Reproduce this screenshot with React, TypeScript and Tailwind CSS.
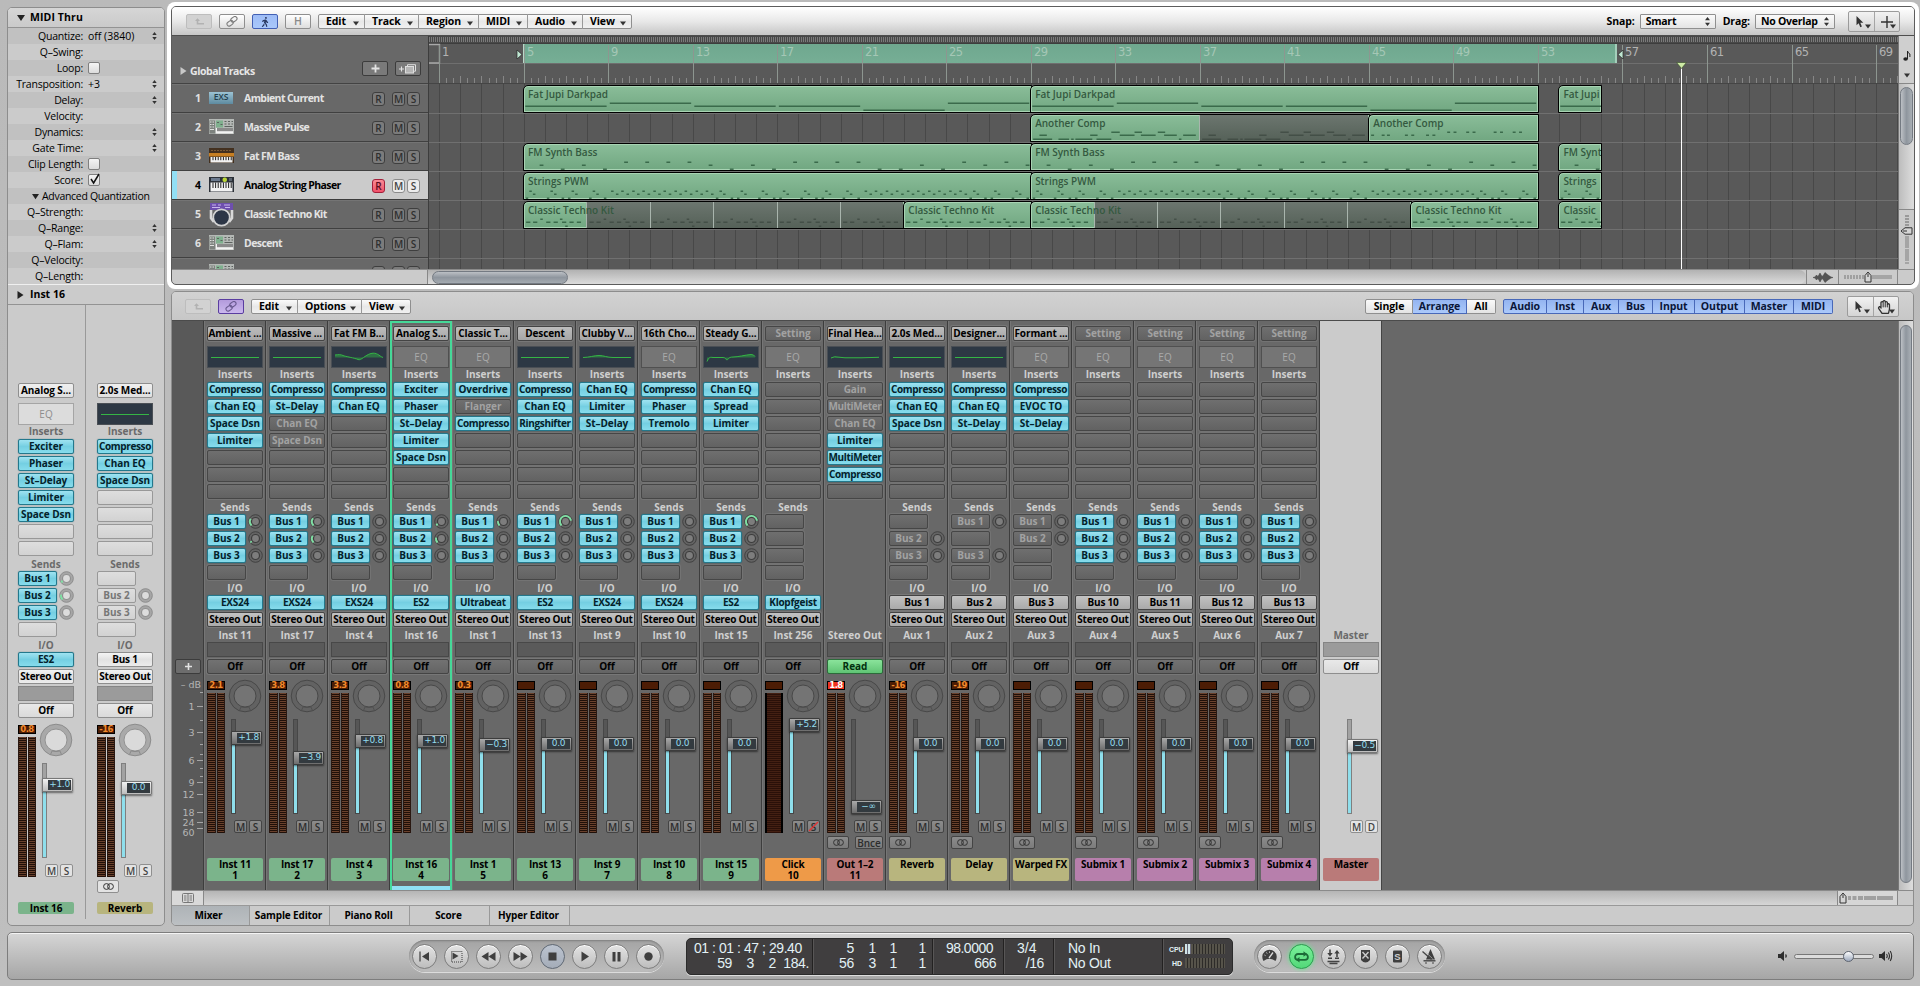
import React from 'react';
import { FaWalking, FaRegHandPaper } from 'react-icons/fa';

/* ---------- shared bits ---------- */

const lightBtn = 'bg-gradient-to-b from-[#f4f4f4] via-[#e2e2e2] to-[#ececec] border border-[#8e8e8e] text-black';
const cyanBtn = 'bg-gradient-to-b from-[#9fe3f1] via-[#74cfe2] to-[#86dcec] border border-[#23788c] text-[#04222b] shadow-[0_0_1px_#1d5d6c]';

function Down({ className = '' }: { className?: string }) {
  return (
    <svg width="6" height="5" viewBox="0 0 6 5" className={className}>
      <path d="M0 0.5h6L3 4.5z" fill="#333" />
    </svg>
  );
}

function UpDown({ h = 9 }: { h?: number }) {
  return (
    <svg width="5" height={h} viewBox="0 0 5 9">
      <path d="M2.5 0L5 3.3H0zM2.5 9L0 5.7h5z" fill="#333" />
    </svg>
  );
}

function BackIcon({ color }: { color: string }) {
  return (
    <svg width="9" height="7" viewBox="0 0 9 7" fill="none" stroke={color}>
      <path d="M2.5 1.5v4.3H9" strokeWidth="1.6" />
      <path d="M0 3L2.5 0.3 5 3z" fill={color} stroke="none" />
    </svg>
  );
}

function LinkIcon({ color }: { color: string }) {
  return (
    <svg width="12" height="11" viewBox="0 0 12 11" fill="none" stroke={color} strokeWidth="1.1">
      <rect x="4.6" y="1.2" width="6.6" height="4.2" rx="2.1" transform="rotate(-35 7.9 3.3)" />
      <rect x="0.8" y="5.2" width="6.6" height="4.2" rx="2.1" transform="rotate(-35 4.1 7.3)" />
    </svg>
  );
}

function IconBtn({ tone, children }: { tone: 'off' | 'light' | 'blue' | 'purple'; children: React.ReactNode }) {
  const cls = {
    off: 'border-[#bdbdbd] bg-[#d2d2d2]',
    light: 'border-[#8f8f8f] bg-gradient-to-b from-white to-[#dedede]',
    blue: 'border-[#4260b4] bg-gradient-to-b from-[#9dbcf6] to-[#a9c8fb]',
    purple: 'border-[#5a3da0] bg-gradient-to-b from-[#b39bdc] to-[#cbb8ee]',
  }[tone];
  return <div className={`flex h-[15px] w-[26px] shrink-0 items-center justify-center rounded-[2px] border ${cls}`}>{children}</div>;
}

function MenuBar({ items }: { items: [string, string][] }) {
  return (
    <div className="flex h-[15px] rounded-[2px] border border-[#8f8f8f] bg-gradient-to-b from-[#fbfbfb] via-[#e8e8e8] to-[#f0f0f0]">
      {items.map(([t, w], i) => (
        <div key={t} className={`relative -my-px flex items-center pl-[7px] text-[10.5px] font-bold leading-none tracking-[-0.1px] text-black ${w} ${i ? 'border-l border-[#999]' : ''}`}>
          <span>{t}</span>
          <Down className="absolute right-[5px] top-[7px]" />
        </div>
      ))}
    </div>
  );
}

function Tool({ children, last = false }: { children: React.ReactNode; last?: boolean }) {
  return (
    <div className={`relative flex h-full w-[25px] items-center justify-center ${last ? 'border-l border-[#a5a5a5]' : ''}`}>
      {children}
      <Down className="absolute bottom-[2px] right-[3px]" />
    </div>
  );
}

function Pointer() {
  return (
    <svg width="8" height="12" viewBox="0 0 8 12" className="-ml-1">
      <path d="M0.5 0v9.2l2.2-2 1.6 4 1.6-.7-1.6-3.8h3z" fill="#333" />
    </svg>
  );
}

/* ---------- inspector parameters ---------- */

type Param = { n: string; v?: string; ud?: boolean; chk?: 0 | 1; tri?: boolean };
const params: Param[] = [
  { n: 'Quantize:', v: 'off (3840)', ud: true },
  { n: 'Q–Swing:' },
  { n: 'Loop:', chk: 0 },
  { n: 'Transposition:', v: '+3', ud: true },
  { n: 'Delay:', ud: true },
  { n: 'Velocity:' },
  { n: 'Dynamics:', ud: true },
  { n: 'Gate Time:', ud: true },
  { n: 'Clip Length:', chk: 0 },
  { n: 'Score:', chk: 1 },
  { n: 'Advanced Quantization', tri: true },
  { n: 'Q–Strength:' },
  { n: 'Q–Range:', ud: true },
  { n: 'Q–Flam:', ud: true },
  { n: 'Q–Velocity:' },
  { n: 'Q–Length:' },
];

function Inspector() {
  return (
    <div className="flex h-[919px] w-[158px] shrink-0 flex-col overflow-hidden rounded-[5px] border border-[#8d8d8d] bg-[#cbcbcb] shadow-[inset_0_1px_0_#eee]">
      <div className="flex h-[20px] shrink-0 items-center border-b border-[#939393] bg-gradient-to-b from-[#d6d6d6] to-[#cacaca] pl-[9px] text-[10.5px] font-bold">
        <svg width="8" height="8" viewBox="0 0 8 8"><path d="M0 1h8L4 7z" fill="#222" /></svg>
        <span className="ml-[5px] tracking-[0.1px]">MIDI Thru</span>
      </div>
      {params.map((p, i) => (
        <div key={p.n} className={`flex h-[16px] shrink-0 items-center text-[10.5px] leading-none text-black ${i % 2 ? 'bg-[#cbcbcb]' : 'bg-[#c1c1c1]'}`}>
          {p.tri ? (
            <div className="flex items-center pl-[24px]">
              <svg width="7" height="7" viewBox="0 0 8 8"><path d="M0 1h8L4 7z" fill="#222" /></svg>
              <span className="ml-[3px] whitespace-nowrap tracking-[-0.3px]">{p.n}</span>
            </div>
          ) : (
            <>
              <span className="w-[75px] whitespace-nowrap text-right tracking-[-0.2px]">{p.n}</span>
              <span className="ml-[5px] flex-1">
                {p.v}
                {p.chk !== undefined && (
                  <span className="block h-[12px] w-[12px] rounded-[2px] border border-[#7f7f7f] bg-gradient-to-b from-[#f4f4f4] to-[#dcdcdc]">
                    {p.chk === 1 && (
                      <svg width="11" height="12" viewBox="0 0 11 12" className="-mt-[2px] overflow-visible">
                        <path d="M2 6l2.6 4L10 1" stroke="#111" strokeWidth="1.5" fill="none" />
                      </svg>
                    )}
                  </span>
                )}
              </span>
              <span className="w-[12px]">{p.ud && <UpDown h={8} />}</span>
            </>
          )}
        </div>
      ))}
      <div className="flex h-[21px] shrink-0 items-center border-b border-t border-b-[#939393] border-t-[#efefef] pl-[9px] text-[10.5px] font-bold">
        <svg width="7" height="8" viewBox="0 0 7 8"><path d="M0.5 0v8l6-4z" fill="#222" /></svg>
        <span className="ml-[6px]">Inst 16</span>
      </div>
      <div className="flex min-h-0 flex-1">
        <div className="mb-[6px] w-[78px] border-r border-[#999] pl-[10px] pt-[78px]">
          <Strip s={inspA} light />
        </div>
        <div className="flex-1 pl-[11px] pt-[78px]">
          <Strip s={inspB} light />
        </div>
      </div>
    </div>
  );
}

/* ---------- channel strip ---------- */

type StripData = {
  name: string; num?: string; setting?: string; eq?: string; ins?: string[]; sends?: string[] | null; knobs?: number[];
  io?: string; ioCyan?: boolean; label?: string; auto?: string; peak?: string; db: string; y: number; color: string;
  stereo?: boolean; out?: boolean; click?: boolean; master?: boolean; sel?: boolean;
};

const G = 'bg-[#7bb48b]', O = 'bg-[#ee9a48]', R = 'bg-[#ba7a79]', Y = 'bg-[#b8b57e]', P = 'bg-[#b77fac]';
const flat = 'M4 10.5H52';
const b3 = ['Bus 1', 'Bus 2', 'Bus 3', ''];

const inspA: StripData = { name: 'Inst 16', setting: 'Analog S...', ins: ['Exciter', 'Phaser', 'St–Delay', 'Limiter', 'Space Dsn'], sends: b3, knobs: [0.08, 0.2, 0], io: 'ES2', ioCyan: true, peak: '0.8', db: '+1.0', y: 14.5, color: G };
const inspB: StripData = { name: 'Reverb', setting: '2.0s Med...', eq: flat, ins: ['Compresso', 'Chan EQ', 'Space Dsn'], sends: ['', '-Bus 2', '-Bus 3', ''], io: 'Bus 1', peak: '-16', db: '0.0', y: 17.5, color: Y, stereo: true };

const strips: StripData[] = [
  { name: 'Inst 11', num: '1', setting: 'Ambient ...', eq: flat, ins: ['Compresso', 'Chan EQ', 'Space Dsn', 'Limiter'], sends: b3, knobs: [0.28, 0.06, 0], io: 'EXS24', ioCyan: true, label: 'Inst 11', peak: '2.1', db: '+1.8', y: 11.5, color: G },
  { name: 'Inst 17', num: '2', setting: 'Massive ...', eq: flat, ins: ['Compresso', 'St–Delay', '-Chan EQ', '-Space Dsn'], sends: b3, knobs: [0.3, 0.28, 0], io: 'EXS24', ioCyan: true, label: 'Inst 17', peak: '3.8', db: '−3.9', y: 31.5, color: G },
  { name: 'Inst 4', num: '3', setting: 'Fat FM B...', eq: 'M4 8C8 7.5 10 7.5 12 8.5S24 11 27 12.5S34 8 40 6.5S48 9 52 10.5', ins: ['Compresso', 'Chan EQ'], sends: b3, io: 'EXS24', ioCyan: true, label: 'Inst 4', peak: '3.3', db: '+0.8', y: 14.5, color: G },
  { name: 'Inst 16', num: '4', setting: 'Analog S...', ins: ['Exciter', 'Phaser', 'St–Delay', 'Limiter', 'Space Dsn'], sends: b3, knobs: [0.08, 0.2, 0], io: 'ES2', ioCyan: true, label: 'Inst 16', peak: '0.8', db: '+1.0', y: 14.5, color: G, sel: true },
  { name: 'Inst 1', num: '5', setting: 'Classic T...', ins: ['Overdrive', '-Flanger', 'Compresso'], sends: b3, knobs: [0.18, 0, 0], io: 'Ultrabeat', ioCyan: true, label: 'Inst 1', peak: '0.3', db: '−0.3', y: 18.5, color: G },
  { name: 'Inst 13', num: '6', setting: 'Descent', eq: flat, ins: ['Compresso', 'Chan EQ', 'Ringshifter'], sends: b3, knobs: [0.8, 0, 0], io: 'ES2', ioCyan: true, label: 'Inst 13', db: '0.0', y: 17.5, color: G },
  { name: 'Inst 9', num: '7', setting: 'Clubby V...', eq: 'M4 10.5C10 10.5 15 8.5 20 8.5S28 10.5 34 10.5H52', ins: ['Chan EQ', 'Limiter', 'St–Delay'], sends: b3, io: 'EXS24', ioCyan: true, label: 'Inst 9', db: '0.0', y: 17.5, color: G },
  { name: 'Inst 10', num: '8', setting: '16th Cho...', ins: ['Compresso', 'Phaser', 'Tremolo'], sends: b3, io: 'EXS24', ioCyan: true, label: 'Inst 10', db: '0.0', y: 17.5, color: G },
  { name: 'Inst 15', num: '9', setting: 'Steady G...', eq: 'M4 14.5C6 10 7 10 10 10.5H20C23 10.5 23 13 24 13S25 10 30 10S42 8 48 7.5Q51 7.5 52 9.5', ins: ['Chan EQ', 'Spread', 'Limiter'], sends: b3, knobs: [0.8, 0, 0], io: 'ES2', ioCyan: true, label: 'Inst 15', db: '0.0', y: 17.5, color: G },
  { name: 'Click', num: '10', ins: [], sends: ['', '', '', ''], io: 'Klopfgeist', ioCyan: true, label: 'Inst 256', db: '+5.2', y: -1.5, color: O, click: true },
  { name: 'Out 1–2', num: '11', setting: 'Final Hea...', eq: 'M4 11Q8 9 10 10L18 10.8H34L52 10.3', ins: ['-Gain', '-MultiMeter', '-Chan EQ', 'Limiter', 'MultiMeter', 'Compresso'], sends: null, label: 'Stereo Out', auto: 'Read', peak: '1.8', db: '−∞', y: 80.5, color: R, stereo: true, out: true },
  { name: 'Reverb', setting: '2.0s Med...', eq: flat, ins: ['Compresso', 'Chan EQ', 'Space Dsn'], sends: ['', '-Bus 2', '-Bus 3', ''], io: 'Bus 1', label: 'Aux 1', peak: '-16', db: '0.0', y: 17.5, color: Y, stereo: true },
  { name: 'Delay', setting: 'Designer...', eq: flat, ins: ['Compresso', 'Chan EQ', 'St–Delay'], sends: ['-Bus 1', '', '-Bus 3', ''], io: 'Bus 2', label: 'Aux 2', peak: '-19', db: '0.0', y: 17.5, color: Y, stereo: true },
  { name: 'Warped FX', setting: 'Formant ...', ins: ['Compresso', 'EVOC TO', 'St–Delay'], sends: ['-Bus 1', '-Bus 2', '', ''], io: 'Bus 3', label: 'Aux 3', db: '0.0', y: 17.5, color: Y, stereo: true },
  { name: 'Submix 1', ins: [], sends: b3, io: 'Bus 10', label: 'Aux 4', db: '0.0', y: 17.5, color: P, stereo: true },
  { name: 'Submix 2', ins: [], sends: b3, io: 'Bus 11', label: 'Aux 5', db: '0.0', y: 17.5, color: P, stereo: true },
  { name: 'Submix 3', ins: [], sends: b3, io: 'Bus 12', label: 'Aux 6', db: '0.0', y: 17.5, color: P, stereo: true },
  { name: 'Submix 4', ins: [], sends: b3, io: 'Bus 13', label: 'Aux 7', db: '0.0', y: 17.5, color: P, stereo: true },
];
const master: StripData = { name: 'Master', label: 'Master', db: '−0.5', y: 19.5, color: R, master: true };

function Slot({ text, light, w = 'w-[56px]' }: { text?: string; light?: boolean; w?: string }) {
  const off = !text || text.startsWith('-');
  const t = text?.replace(/^-/, '');
  const cls = off
    ? light
      ? 'bg-gradient-to-b from-[#dedede] to-[#d2d2d2] border border-[#989898] text-[#777]'
      : 'bg-gradient-to-b from-[#6f6f6f] to-[#626262] border border-[#464646] text-[#a2a2a2] shadow-[0_0_0_1px_#737373]'
    : cyanBtn;
  const long = t === 'MultiMeter' || t === 'Ringshifter' || t === 'Compresso';
  return (
    <div className={`flex h-[15px] shrink-0 items-center justify-center overflow-hidden whitespace-nowrap rounded-[2px] pb-px text-[10px] font-bold leading-none ${long ? 'tracking-[-0.35px]' : 'tracking-[-0.05px]'} ${w} ${cls}`}>
      {t}
    </div>
  );
}

function Knob({ v, light }: { v: number; light?: boolean }) {
  const a0 = (225 * Math.PI) / 180;
  const a = a0 - v * ((270 * Math.PI) / 180);
  const p = (t: number) => `${7.5 + 5.6 * Math.cos(t)} ${7.5 - 5.6 * Math.sin(t)}`;
  return (
    <svg width="15" height="15" viewBox="0 0 15 15">
      <circle cx="7.5" cy="7.5" r="6.8" fill={light ? '#a6a6a6' : '#636363'} stroke={light ? '#8c8c8c' : '#414141'} />
      <circle cx="7.5" cy="7.5" r="4" fill={light ? '#dcdcdc' : '#7d7d7d'} stroke={light ? '#909090' : '#3c3c3c'} strokeWidth="1.2" />
      {v > 0 && <path d={`M${p(a0)}A5.6 5.6 0 ${v > 0.66 ? 1 : 0} 1 ${p(a)}`} fill="none" stroke="#7fe0a4" strokeWidth="1.9" />}
    </svg>
  );
}

function SmallBtn({ t, light, slash, w = 'w-[13px]' }: { t: React.ReactNode; light?: boolean; slash?: boolean; w?: string }) {
  return (
    <div
      className={`relative flex h-[13px] shrink-0 items-center justify-center rounded-[2px] border text-[10px] font-semibold leading-none ${w} ${
        light ? 'border-[#8f8f8f] bg-[#e3e3e3] text-[#444]' : 'border-[#444] bg-gradient-to-b from-[#8c8c8c] to-[#7b7b7b] text-[#2d2d2d]'
      }`}
    >
      {t}
      {slash && (
        <svg width="11" height="11" viewBox="0 0 11 11" className="absolute left-0 top-0"><path d="M1 10L10 1" stroke="#e03535" strokeWidth="1.4" /></svg>
      )}
    </div>
  );
}

function Rings() {
  return (
    <svg width="13" height="7" viewBox="0 0 13 7" fill="none" stroke="#333">
      <circle cx="4.5" cy="3.5" r="2.9" /><circle cx="8.5" cy="3.5" r="2.9" />
    </svg>
  );
}

const meterCls = 'h-full bg-[repeating-linear-gradient(180deg,#6a412c_0px,#6a412c_1px,#1f0f08_1px,#1f0f08_2px)] border-x border-[#2a1811]';

function Strip({ s, light }: { s: StripData; light?: boolean }) {
  const head = light ? 'text-[#6a6a6a]' : 'text-[#cfcfcf]';
  const hide = s.master ? 'invisible' : '';
  const noIo = s.master || s.out;
  const secLabel = `flex shrink-0 items-center justify-center pb-[2px] text-[10px] font-bold leading-none whitespace-nowrap ${head}`;
  return (
    <div className="flex w-[56px] flex-col">
      {s.setting ? (
        <div className={`flex h-[15px] shrink-0 items-center justify-center overflow-hidden whitespace-nowrap rounded-[2px] border pb-px text-[10px] font-bold leading-none tracking-[-0.1px] text-black ${light ? 'border-[#8e8e8e] bg-gradient-to-b from-[#efefef] to-[#e0e0e0]' : 'border-[#444] bg-gradient-to-b from-[#bdbdbd] to-[#a6a6a6] shadow-[0_0_0_1px_#777]'}`}>{s.setting}</div>
      ) : (
        <div className={`${hide}`}><Slot text="-Setting" light={light} /></div>
      )}
      {s.eq ? (
        <div className="mt-[5px] h-[22px] shrink-0 border border-[#4a4f55] bg-[#2d3844]">
          <svg width="56" height="20" viewBox="0 0 56 20" className="-ml-px">
            {s.eq !== flat && <path d={`${s.eq}V10.5H4z`} fill="#2f8a45" opacity="0.7" />}
            <path d={s.eq} fill="none" stroke="#35b545" strokeWidth="1" />
          </svg>
        </div>
      ) : (
        <div className={`mt-[5px] flex h-[22px] shrink-0 items-center justify-center border text-[10px] leading-none ${hide} ${light ? 'border-[#a5a5a5] bg-[#dcdcdc] text-[#8d8d8d]' : 'border-[#505050] bg-[#757575] text-[#aaa]'}`}>EQ</div>
      )}
      <div className={`${secLabel} h-[14px] ${hide}`}>Inserts</div>
      <div className={`flex h-[119px] shrink-0 flex-col gap-[2px] ${hide}`}>
        {Array.from({ length: 7 }, (_, i) => <Slot key={i} text={s.ins?.[i]} light={light} />)}
      </div>
      <div className={`${secLabel} h-[13px] ${s.sends ? '' : 'invisible'}`}>Sends</div>
      <div className={`flex h-[68px] shrink-0 flex-col gap-[2px] ${s.sends ? '' : 'invisible'}`}>
        {(s.sends ?? ['', '', '', '']).map((b, i) => (
          <div key={i} className="flex h-[15px] items-center justify-between">
            <Slot text={b} light={light} w="w-[39px]" />
            {b && <Knob v={s.knobs?.[i] ?? 0} light={light} />}
          </div>
        ))}
      </div>
      <div className={`${secLabel} h-[13px] ${noIo ? 'invisible' : ''}`}>I/O</div>
      {[s.io, 'Stereo Out'].map((t, i) => (
        <div key={i} className={`mb-[2px] flex h-[15px] shrink-0 items-center justify-center overflow-hidden whitespace-nowrap rounded-[2px] pb-px text-[10px] font-bold leading-none tracking-[-0.25px] ${noIo ? 'invisible' : ''} ${i === 0 && s.ioCyan ? cyanBtn : light ? lightBtn : 'border border-[#444] bg-gradient-to-b from-[#c2c2c2] to-[#aaaaaa] text-black shadow-[0_0_0_1px_#777]'}`}>
          {t}
        </div>
      ))}
      {s.label && <div className={`${secLabel} h-[13px]`}>{s.label}</div>}
      <div className={`h-[15px] shrink-0 border ${light ? 'border-[#858585] bg-[#9b9b9b]' : 'border-[#484848] bg-[#5a5a5a]'}`} />
      <div className={`mt-[2px] flex h-[15px] shrink-0 items-center justify-center rounded-[2px] border pb-px text-[10px] font-bold leading-none ${s.auto ? 'border-[#2c6b3a] bg-gradient-to-b from-[#8ae39b] to-[#5fc474] text-[#03300f]' : light ? 'border-[#8e8e8e] bg-gradient-to-b from-[#e9e9e9] to-[#dadada] text-black' : 'border-[#444] bg-gradient-to-b from-[#727272] to-[#646464] text-black shadow-[0_0_0_1px_#777]'}`}>
        {s.auto ?? 'Off'}
      </div>

      <div className="mt-[7px] flex h-[152px] shrink-0">
        <div className={`flex w-[18px] shrink-0 flex-col justify-between ${hide}`}>
          <div className={`flex h-[9px] items-center justify-center border border-black font-['DejaVu_Sans',sans-serif] text-[8.5px] font-bold leading-none tracking-[-0.6px] ${s.out ? 'bg-[#f0331f] text-white' : 'bg-[#4c1c04] text-[#f08a2c]'}`}>{s.peak}</div>
          <div className={`flex h-[140px] gap-[1px] ${s.click ? 'border-x-2 border-black' : ''}`}>
            {s.click ? (
              <div className="h-full flex-1 bg-[repeating-linear-gradient(180deg,#442013_0px,#442013_1px,#2a1009_1px,#2a1009_2px)]" />
            ) : (
              <><div className={`flex-1 ${meterCls}`} /><div className={`flex-1 ${meterCls}`} /></>
            )}
          </div>
        </div>
        <div className="flex w-[38px] flex-col">
          <svg width="34" height="34" viewBox="0 0 34 34" className={`-mt-[2px] ml-[3px] shrink-0 ${hide}`}>
            <circle cx="17" cy="17" r="15.8" fill={light ? '#a9a9a9' : '#626262'} stroke={light ? '#8c8c8c' : '#484848'} />
            <circle cx="17" cy="17" r="11" fill={light ? '#dadada' : '#747474'} stroke={light ? '#929292' : '#484848'} />
            <path d="M11.5 31.5l1.6-3.6q3.9 1.4 7.8 0l1.6 3.6" fill="none" stroke={light ? '#8a8a8a' : '#505050'} />
          </svg>
          <div className="relative mt-[6px] h-[95px] shrink-0">
            <div className={`absolute left-[6px] top-0 h-full w-[5px] border ${light ? 'border-[#7f7f7f] bg-[#a2a2a2]' : 'border-[#474747] bg-[#565656]'}`} />
            <div className="absolute bottom-[1px] left-[7px] w-[3px] bg-[#8fdfec]" style={{ height: Math.max(1, 95 - s.y - 10) }} />
            <div className={`absolute left-[6px] flex h-[14px] w-[31px] rounded-[1px] border p-[1px] shadow-[0_1px_2px_rgba(0,0,0,.5)] ${light ? 'border-[#777] bg-gradient-to-b from-[#f2f2f2] to-[#bdbdbd]' : 'border-[#3c3c3c] bg-gradient-to-b from-[#a9a9a9] to-[#6d6d6d]'}`} style={{ top: s.y }}>
              <div className="ml-[4px] flex flex-1 items-center justify-center bg-[#333a3f] font-['DejaVu_Sans',sans-serif] text-[9px] leading-none tracking-[-0.3px] text-[#94dcee]">{s.db}</div>
            </div>
          </div>
          <div className="mt-[6px] flex gap-[2px] pl-[9px]">
            <SmallBtn t="M" light={light} />
            <SmallBtn t={s.master ? 'D' : 'S'} light={light} slash={s.click} />
          </div>
        </div>
      </div>
      <div className={`mt-[3px] flex h-[13px] shrink-0 justify-between ${s.stereo ? '' : 'invisible'}`}>
        <SmallBtn t={<Rings />} light={light} w="w-[22px]" />
        {s.out && <SmallBtn t="Bnce" w="w-[28px]" />}
      </div>
      {light && !s.master ? (
        <div className={`mt-[9px] flex h-[12px] shrink-0 items-center justify-center rounded-[2px] text-[10px] font-bold leading-none tracking-[-0.1px] text-black ${s.color}`}>{s.name}</div>
      ) : (
        <div className={`mt-[9px] flex h-[23px] shrink-0 flex-col items-center whitespace-nowrap rounded-[2px] text-[10px] font-bold leading-[12px] tracking-[-0.15px] text-black ${s.color}`}>
          <span>{s.name}</span>
          <span className="-mt-px">{s.num}</span>
        </div>
      )}
    </div>
  );
}

/* ---------- arrange area ---------- */

const bar = (n: number) => 10.2 + (n - 1) * 21.13; // px inside the canvas
const BAR = 21.13;

type Note = [number, number, number]; // start bar, length, y
const padNotes = (len: number): Note[] => [20, 17, 20, 20, 24, 17].map((y, i) => [i * 4 + 0.06, 3.85, y] as Note).filter((n) => n[0] < len);
const bassLv = 'mlmlhhhhmlmlhhhhllmlhmhm';
const bassNotes = (len: number): Note[] =>
  bassLv.split('').map((c, i) => [i + 0.74, 0.18, c === 'h' ? 18 : c === 'm' ? 21 : 25] as Note).filter((n) => n[0] < len);
const stringNotes = (len: number): Note[] => {
  const out: Note[] = [];
  for (let i = 0; i < len; i++) {
    if (i % 12 < 4 || i % 12 > 8) {
      out.push([i + 0.08, 0.12, 25], [i + 0.25, 0.12, 18], [i + 0.42, 0.12, 21]);
      if (i % 2) out.push([i + 0.78, 0.12, 25]);
    } else {
      out.push([i + 0.12, 0.12, 18], [i + 0.35, 0.12, 21], [i + 0.6, 0.12, 18], [i + 0.85, 0.12, 21]);
    }
  }
  return out;
};
const drumNotes = (len: number): Note[] => {
  const out: Note[] = [];
  for (let b = 0; b < len; b += 3)
    out.push([b + 0.1, 0.2, 20], [b + 0.43, 0.2, 20], [b + 0.77, 0.12, 17], [b + 1.05, 0.2, 20], [b + 1.4, 0.2, 20], [b + 1.7, 0.12, 17], [b + 1.8, 0.2, 20], [b + 1.95, 0.12, 24], [b + 2.15, 0.2, 20], [b + 2.5, 0.2, 20]);
  return out.filter((n) => n[0] < len);
};
const compNotes = (len: number): Note[] => {
  const out: Note[] = [];
  for (let b = 0; b < len; b += 8)
    out.push([b + 0.1, 0.9, 24], [b + 0.4, 0.35, 20], [b + 1.3, 0.5, 24], [b + 1.9, 0.12, 24], [b + 2.1, 0.8, 24], [b + 2.8, 0.35, 20], [b + 3.1, 0.7, 24], [b + 3.8, 0.4, 17], [b + 4.2, 0.7, 20], [b + 4.9, 0.35, 17], [b + 5.2, 0.7, 20], [b + 6, 0.35, 17], [b + 6.3, 0.6, 20], [b + 7, 0.12, 24], [b + 7.2, 0.6, 20]);
  return out;
};
const comp2 = (): Note[] => [0.1, 0.6, 0.85, 1.7, 2, 2.7, 3].map((b) => [b, 0.14, 20] as Note).concat([3.7, 4, 4.6, 4.9, 5.9, 6.2, 6.8, 7.1].map((b) => [b, 0.14, 17] as Note));

type Region = { row: number; a: number; b: number; name: string; f: (n: number) => Note[]; loops?: number[] };
const regions: Region[] = [
  { row: 0, a: 5, b: 29, name: 'Fat Jupi Darkpad', f: padNotes },
  { row: 0, a: 29, b: 53, name: 'Fat Jupi Darkpad', f: padNotes },
  { row: 0, a: 54, b: 56, name: 'Fat Jupi', f: padNotes },
  { row: 1, a: 29, b: 45, name: 'Another Comp', f: compNotes, loops: [37, 45] },
  { row: 1, a: 45, b: 53, name: 'Another Comp', f: comp2 },
  { row: 2, a: 5, b: 29, name: 'FM Synth Bass', f: bassNotes },
  { row: 2, a: 29, b: 53, name: 'FM Synth Bass', f: bassNotes },
  { row: 2, a: 54, b: 56, name: 'FM Synt', f: bassNotes },
  { row: 3, a: 5, b: 29, name: 'Strings PWM', f: stringNotes },
  { row: 3, a: 29, b: 53, name: 'Strings PWM', f: stringNotes },
  { row: 3, a: 54, b: 56, name: 'Strings', f: stringNotes },
  { row: 4, a: 5, b: 23, name: 'Classic Techno Kit', f: drumNotes, loops: [8, 11, 14, 17, 20, 23] },
  { row: 4, a: 23, b: 29, name: 'Classic Techno Kit', f: drumNotes },
  { row: 4, a: 29, b: 47, name: 'Classic Techno Kit', f: drumNotes, loops: [32, 35, 38, 41, 44, 47] },
  { row: 4, a: 47, b: 53, name: 'Classic Techno Kit', f: drumNotes },
  { row: 4, a: 54, b: 56, name: 'Classic', f: drumNotes },
];

function RegionBox({ r }: { r: Region }) {
  const w = (r.b - r.a) * BAR + 1.5;
  const loop0 = r.loops ? (r.loops[0] - r.a) * BAR : Infinity;
  return (
    <div className="absolute h-[28px] overflow-hidden rounded-tl-[5px] border-[1.5px] border-black bg-gradient-to-b from-[#8abd99] to-[#71a781] shadow-[inset_0_0_0_1px_#a8d3b3]" style={{ left: bar(r.a) - 0.7, top: 1 + r.row * 29, width: w }}>
      {r.loops?.slice(0, -1).map((l, i) => (
        <div key={l} className="absolute top-0 h-full border-l border-[#a9b5ad] bg-gradient-to-b from-[#6c766f] to-[#556158]" style={{ left: (l - r.a) * BAR - 1, width: (r.loops![i + 1] - l) * BAR }} />
      ))}
      <svg width={w} height="27" className="absolute left-0 top-0">
        {r.f(r.b - r.a).map(([s, l, y], i) => (
          <rect key={i} x={s * BAR} y={y - 0.4} width={Math.max(l * BAR, 2.5)} height="1.2" fill={s * BAR >= loop0 ? '#3f4a43' : '#2c5a3c'} />
        ))}
      </svg>
      <span className="absolute left-[4px] top-[2px] whitespace-nowrap text-[10px] font-semibold leading-[12px] text-[#34593f]">{r.name}</span>
    </div>
  );
}

function Ruler() {
  const marks = Array.from({ length: 18 }, (_, i) => 1 + i * 4);
  const ticks = Array.from({ length: 70 * 3 }, (_, i) => i).filter((i) => bar(1 + i / 3) < 1470);
  return (
    <svg width="1470" height="48" viewBox="0 0 1470 48" className="block shrink-0">
      <defs>
        <pattern id="rib" width="2" height="8" patternUnits="userSpaceOnUse"><rect width="1" height="8" fill="#7b7b7b" /></pattern>
        <linearGradient id="cyc" x1="0" x2="0" y1="0" y2="1"><stop offset="0" stopColor="#6fa88f" /><stop offset="1" stopColor="#76ae95" /></linearGradient>
      </defs>
      <rect width="1470" height="48" fill="#595959" />
      <rect y="0" width="1470" height="7" fill="#484848" />
      <rect y="1" width="1470" height="5" fill="url(#rib)" />
      <rect y="7" width="1470" height="1" fill="#3d3d3d" />
      <rect x={bar(5)} y="8" width={1188 - bar(5)} height="19" fill="url(#cyc)" />
      <path d={`M${bar(5)} 8v19M1187 8v19`} stroke="#c5e6d5" strokeWidth="1.2" />
      <path d="M0 27.5H1470" stroke="#6f6f6f" />
      <path d="M0 8.5H10.5V27H0" fill="none" stroke="#a9a9a9" strokeWidth="1.4" />
      {ticks.map((i) => {
        const x = Math.round(bar(1 + i / 3)) + 0.5;
        return <path key={i} d={`M${x} ${i % 3 ? 42 : 40}V48`} stroke="#868686" />;
      })}
      {marks.map((n) => {
        const x = Math.round(bar(n)) + 0.5;
        const inCycle = n >= 5 && n <= 53;
        return (
          <g key={n}>
            <path d={`M${x} 9V48`} stroke="#8d9690" />
            <text x={x + 2.5} y="19.5" fontSize="11.5" fontFamily='"DejaVu Sans", sans-serif' fill={inCycle ? '#a5c7b6' : '#b2b2b2'} letterSpacing="-0.5">{n}</text>
          </g>
        );
      })}
      <path d="M88 14v9l5-4.5z" fill="#bfe6d2" stroke="#222" strokeWidth="0.7" />
      <path d="M1194 14v9l-5-4.5z" fill="#bfe6d2" stroke="#222" strokeWidth="0.7" />
      <path d="M0 47.5H1470" stroke="#454545" />
    </svg>
  );
}

function Canvas() {
  const lines = Array.from({ length: 70 }, (_, i) => Math.round(bar(i + 1)) + 0.5).filter((x) => x < 1470);
  return (
    <div className="relative flex w-[1470px] flex-col overflow-hidden border-l border-[#3d3d3d] bg-[#595959]">
      <Ruler />
      <div className="relative h-[185px] overflow-hidden">
        <svg width="1470" height="185" className="block">
          {lines.map((x) => <path key={x} d={`M${x} 0V185`} stroke="#484848" />)}
          {[29, 58, 87, 116, 145, 174].map((y) => <path key={y} d={`M0 ${y + 0.5}H1470`} stroke="#707070" />)}
        </svg>
        {regions.map((r, i) => <RegionBox key={i} r={r} />)}
      </div>
      <svg width="12" height="208" viewBox="0 0 12 208" className="absolute left-[1247px] top-[25px]">
        <path d="M5.500 5V208" stroke="#fff" strokeWidth="1" />
        <path d="M0.500 1.500h10l-5 6z" fill="#cdeaa5" stroke="#3d5030" strokeWidth="0.700" />
      </svg>
    </div>
  );
}

function TrackIcon({ k }: { k: string }) {
  if (k === 'exs')
    return <div className="mb-[2px] flex h-[12px] w-[24px] items-center justify-center bg-gradient-to-b from-[#9cc3d4] to-[#5e8ba0] text-[8.5px] font-semibold leading-none text-[#24404d]">EXS</div>;
  if (k === 'drum')
    return (
      <svg width="25" height="25" viewBox="0 0 25 25">
        <rect x="1" y="1" width="23" height="7" fill="#6e4fae" /><path d="M3 3h4M9 3h3M15 3h6M3 5.500h8M16 5.500h5" stroke="#c9b6ee" />
        <path d="M2 8v8l3 4M23 8v8l-3 4" stroke="#d8d8d8" strokeWidth="2.600" fill="none" />
        <circle cx="12.500" cy="15.500" r="8.200" fill="#2d3646" stroke="#d2d2d2" strokeWidth="1.700" />
      </svg>
    );
  const [top, mid] = k === 'fm' ? ['#43301f', '#c77f22'] : k === 'ana' ? ['#2c3138', '#32363b'] : ['#a3a8a4', '#8e9390'];
  return (
    <svg width="25" height="15" viewBox="0 0 25 15" className="mb-[2px]">
      <rect width="25" height="15" fill={k === 'syn' ? '#b4b8b5' : top} />
      {k === 'syn' && (
        <>
          <rect x="0.500" y="1.500" width="5.500" height="13" fill="#7d827e" />
          <path d="M1 3h1.500M3.500 3H5M1 5.500h1.500M3.500 5.500H5M1 8h1.500M3.500 8H5M1 10.500h4" stroke="#dfe1df" />
          <rect x="7" y="1.500" width="7" height="7" fill="#7fb08e" />
          <path d="M8 3.500h2M11.500 5.500h2M15.500 2.500h2M19 2.500h2M22.500 2.500h1.500M15.500 5h2M19 5h2M22.500 5h1.500M15.500 7.500h8" stroke="#5d625f" />
        </>
      )}
      {k === 'fm' && <><path d="M2 2.500h21" stroke="#7b5a35" strokeDasharray="2 1" /><rect y="5" width="25" height="3.500" fill={mid} /></>}
      {k === 'ana' && <><rect x="2" y="1" width="9" height="3" fill="#6b7a8e" /><rect x="13.500" y="0.500" width="4.500" height="4.500" rx="2" fill="#b9d638" /><rect x="20" y="1" width="3" height="3" fill="#59626e" /></>}
      <rect x={k === 'syn' ? 7 : 1.5} y={k === 'ana' ? 5.5 : 9} width={k === 'syn' ? 17 : 22} height={k === 'ana' ? 9 : 5.5} fill="#f2f2f2" />
      {Array.from({ length: 8 }, (_, i) => {
        const x = (k === 'syn' ? 8.5 : 3.5) + i * (k === 'syn' ? 2 : 2.6);
        return <rect key={i} x={x} y={k === 'ana' ? 5.5 : 9} width="1" height={k === 'ana' ? 5.5 : 3.2} fill="#222" />;
      })}
    </svg>
  );
}

const tracks: [string, string][] = [
  ['Ambient Current', 'exs'], ['Massive Pulse', 'syn'], ['Fat FM Bass', 'fm'], ['Analog String Phaser', 'ana'], ['Classic Techno Kit', 'drum'], ['Descent', 'syn'], ['', 'syn'],
];

function TrackBtn({ t, sel, rec }: { t: string; sel: boolean; rec?: boolean }) {
  const cls = rec ? 'border-[#a3203a] bg-gradient-to-b from-[#f98a95] to-[#f0506a] text-[#5a0c1c]' : sel ? 'border-[#8b8b8b] bg-[#ececec] text-[#444]' : 'border-[#3e3e3e] bg-[#7b7b7b] text-[#2f2f2f]';
  return <div className={`flex h-[14px] w-[13px] items-center justify-center rounded-[3px] border text-[10px] font-semibold leading-none ${cls}`}>{t}</div>;
}

function TrackList() {
  return (
    <div className="flex w-[256px] shrink-0 flex-col overflow-hidden bg-[#686868]">
      <div className="flex h-[48px] shrink-0 items-end border-b border-[#434343] pb-[4px] pl-[8px] pr-[7px]">
        <svg width="7" height="8" viewBox="0 0 7 8" className="mb-[4px]"><path d="M0.5 0v8l6-4z" fill="#c8c8c8" /></svg>
        <span className="ml-[3px] flex-1 text-[10.5px] font-bold leading-[15px] tracking-[-0.45px] text-[#e6e6e6]">Global Tracks</span>
        <div className="mb-[3px] flex gap-[7px]">
          <div className="flex h-[15px] w-[26px] items-center justify-center rounded-[2px] border border-[#3c3c3c] bg-[#7a7a7a]">
            <svg width="9" height="9" viewBox="0 0 9 9"><path d="M4.5 0.5v8M0.5 4.5h8" stroke="#e3e3e3" strokeWidth="1.8" /></svg>
          </div>
          <div className="flex h-[15px] w-[26px] items-center justify-center rounded-[2px] border border-[#3c3c3c] bg-[#7a7a7a]">
            <svg width="18" height="10" viewBox="0 0 18 10" fill="none"><path d="M2.5 2.5v5M0 5h5" stroke="#e3e3e3" strokeWidth="1.1" /><rect x="6.5" y="2.5" width="8" height="6.5" fill="#b5b5b5" stroke="#ddd" /><path d="M8.5 2.5V0.7h8v6.5h-2" stroke="#ddd" /></svg>
          </div>
        </div>
      </div>
      {tracks.map(([n, k], i) => {
        const sel = i === 3;
        return (
          <div key={i} className={`flex h-[29px] shrink-0 items-center border-b pr-[8px] pt-px ${sel ? 'border-b-[#3c3c3c] bg-[#cbcbcb]' : 'border-b-[#404040] bg-[#686868] shadow-[inset_0_1px_0_#747474]'}`}>
            <div className={`-mt-px h-[28px] w-[5px] ${sel ? 'bg-[#92dff5]' : ''}`} />
            <span className={`w-[24px] text-right text-[10.5px] font-bold leading-none ${sel ? 'text-black' : 'text-[#e0e0e0]'}`}>{n && i + 1}</span>
            <div className="ml-[7px] flex h-[26px] w-[26px] items-center justify-center">
              <TrackIcon k={k} />
            </div>
            <span className={`ml-[10px] flex-1 whitespace-nowrap text-[10.5px] font-bold leading-none tracking-[-0.6px] ${sel ? 'text-black' : 'text-[#e3e3e3]'}`}>{n}</span>
            <TrackBtn t={n && 'R'} sel={sel} rec={sel} />
            <div className="ml-[7px] flex gap-[2px]"><TrackBtn t={n && 'M'} sel={sel} /><TrackBtn t={n && 'S'} sel={sel} /></div>
          </div>
        );
      })}
    </div>
  );
}

const hThumb = 'rounded-full border border-[#747a82] bg-gradient-to-b from-[#bcc0c5] via-[#8f969e] to-[#a4aab0]';
const vThumb = 'rounded-full border border-[#747a82] bg-gradient-to-r from-[#bcc0c5] via-[#8f969e] to-[#a9afb5]';

function Select({ t, w }: { t: string; w: string }) {
  return (
    <div className={`flex h-[15px] items-center justify-between rounded-[1px] border border-[#8f8f8f] bg-gradient-to-b from-[#fafafa] to-[#e4e4e4] pl-[5px] pr-[5px] text-[10.5px] font-bold leading-none tracking-[-0.25px] ${w}`}>
      {t}
      <UpDown />
    </div>
  );
}

function Arrange() {
  return (
    <div className="flex h-[287px] w-[1752px] rounded-[8px] bg-white p-[4px]">
      <div className="flex flex-1 flex-col overflow-hidden rounded-[5px] border border-[#5c5c5c] bg-[#cbcbcb]">
        <div className="flex h-[29px] shrink-0 items-center border-b border-[#4e4e4e] bg-gradient-to-b from-white via-[#e9e9e9] to-[#c6c6c6] pl-[14px] pr-[14px] pt-px">
          <div className="flex items-center gap-[7px]">
            <IconBtn tone="off"><BackIcon color="#b2b2b2" /></IconBtn>
            <IconBtn tone="light"><LinkIcon color="#7e7e7e" /></IconBtn>
            <IconBtn tone="blue"><FaWalking size={10} color="#2a3a63" /></IconBtn>
            <IconBtn tone="light"><span className="text-[10.5px] font-semibold leading-none text-[#8a8a8a]">H</span></IconBtn>
            <MenuBar items={[['Edit', 'w-[45px]'], ['Track', 'w-[54px]'], ['Region', 'w-[60px]'], ['MIDI', 'w-[49px]'], ['Audio', 'w-[55px]'], ['View', 'w-[49px]']]} />
          </div>
          <div className="ml-auto flex items-center text-[10.5px] font-bold leading-none">
            <span className="mr-[5px] tracking-[-0.1px]">Snap:</span>
            <Select t="Smart" w="w-[76px]" />
            <span className="ml-[7px] mr-[5px] tracking-[-0.1px]">Drag:</span>
            <Select t="No Overlap" w="w-[80px]" />
            <div className="ml-[13px] flex h-[21px] rounded-[2px] border border-[#9b9b9b] bg-gradient-to-b from-[#f2f2f2] to-[#d4d4d4]">
              <Tool><Pointer /></Tool>
              <Tool last><svg width="12" height="12" viewBox="0 0 12 12" className="-ml-px"><path d="M6 0v12M0 6h12" stroke="#333" strokeWidth="1.4" /></svg></Tool>
            </div>
          </div>
        </div>
        <div className="flex h-[233px] shrink-0">
          <TrackList />
          <Canvas />
          <div className="flex flex-1 flex-col items-center border-l border-[#777]">
            <div className="flex h-[48px] w-full flex-col items-center justify-end gap-[12px] border-b border-[#888] bg-[#cfcfcf] pb-[5px]">
              <svg width="8" height="11" viewBox="0 0 8 11"><ellipse cx="2.6" cy="9" rx="2.3" ry="1.7" fill="#222" /><path d="M4.5 9V1q.4 2 2.4 3v3" stroke="#222" fill="none" /></svg>
              <Down />
            </div>
            <div className="h-[125px] w-full bg-gradient-to-r from-[#bdbdbd] to-[#dedede] px-px pt-[3px]"><div className={`h-[58px] w-full ${vThumb}`} /></div>
            <div className="flex w-full flex-1 justify-center border-t border-[#888]">
              <svg width="14" height="58" viewBox="0 0 14 58"><path d="M7 5v14" stroke="#999" strokeWidth="4" strokeDasharray="2 1" /><path d="M7 26v28" stroke="#a5a5a5" strokeWidth="4" strokeDasharray="12 1" /><path d="M1 21l4-3.2h7v6.4H5z" fill="#d5d5d5" stroke="#333" /><path d="M3 21h4" stroke="#333" /></svg>
            </div>
          </div>
        </div>
        <div className="flex flex-1 border-t border-[#8a8a8a]">
          <div className="w-[256px] border-r border-[#888]" />
          <div className="flex w-[1378px] items-center rounded-r-full bg-gradient-to-b from-[#b2b2b2] to-[#dcdcdc] pl-[4px]"><div className={`h-[13px] w-[136px] ${hThumb}`} /></div>
          <div className="flex w-[32px] items-center justify-center border-l border-[#888]">
            <svg width="20" height="11" viewBox="0 0 20 11"><path d="M0 5.500L2 5l1.500-2L5 4.500 7 1l2 3.500L10.500 3 12 0.500l3 2.500 3 2 2 .500-2 .500-3 2-3 2.500L10.500 8 9 6.500 7 10 5 6.500 3.500 8 2 6z" fill="#555" stroke="#444" strokeWidth="0.500" /></svg>
          </div>
          <div className="flex w-[60px] items-center justify-center border-x border-[#888]">
            <svg width="50" height="12" viewBox="0 0 50 12"><path d="M1 6h20" stroke="#a0a0a0" strokeWidth="4" strokeDasharray="2 1" /><path d="M29 6h20" stroke="#a5a5a5" strokeWidth="4" /><path d="M22 11V4.500L25 1l3 3.500V11z" fill="#d5d5d5" stroke="#333" /><path d="M25 2.500V6" stroke="#333" /></svg>
          </div>
        </div>
      </div>
    </div>
  );
}

/* ---------- mixer ---------- */

const scale: [string, number][] = [['1', 106], ['3', 132], ['6', 160], ['9', 182], ['12', 194], ['18', 212], ['24', 222], ['60', 232]];

function Seg({ items }: { items: [string, string, boolean][] }) {
  return (
    <div className="flex h-[15px]">
      {items.map(([t, w, on], i) => (
        <div key={t} className={`flex items-center justify-center border-y border-r text-[10.5px] font-bold leading-none tracking-[-0.1px] ${w} ${i === 0 ? 'rounded-l-[2px] border-l' : ''} ${i === items.length - 1 ? 'rounded-r-[2px]' : ''} ${on ? 'border-[#4868b8] bg-gradient-to-b from-[#94b4f0] to-[#abc9fb] text-[#0a1638]' : 'border-[#8f8f8f] bg-gradient-to-b from-[#fafafa] to-[#e3e3e3] text-black'}`}>{t}</div>
      ))}
    </div>
  );
}

function Mixer() {
  return (
    <div className="ml-[4px] mt-[2px] flex h-[635px] w-[1743px] flex-col overflow-hidden rounded-[5px] border border-[#8d8d8d] bg-[#cbcbcb]">
      <div className="flex h-[29px] shrink-0 items-center border-b border-[#4b4b4b] bg-gradient-to-b from-[#d2d2d2] to-[#c7c7c7] pl-[13px] pr-[14px] pt-px">
        <div className="flex items-center gap-[7px]">
          <IconBtn tone="off"><BackIcon color="#b2b2b2" /></IconBtn>
          <IconBtn tone="purple"><LinkIcon color="#6a5a90" /></IconBtn>
          <MenuBar items={[['Edit', 'w-[45px]'], ['Options', 'w-[64px]'], ['View', 'w-[49px]']]} />
        </div>
        <div className="ml-auto flex items-center">
          <Seg items={[['Single', 'w-[48px]', false], ['Arrange', 'w-[54px]', true], ['All', 'w-[29px]', false]]} />
          <div className="w-[7px]" />
          <Seg items={[['Audio', 'w-[44px]', true], ['Inst', 'w-[37px]', true], ['Aux', 'w-[35px]', true], ['Bus', 'w-[34px]', true], ['Input', 'w-[42px]', true], ['Output', 'w-[50px]', true], ['Master', 'w-[49px]', true], ['MIDI', 'w-[39px]', true]]} />
          <div className="ml-[14px] flex h-[21px] rounded-[2px] border border-[#9b9b9b] bg-gradient-to-b from-[#f2f2f2] to-[#d4d4d4]">
            <Tool><Pointer /></Tool>
            <Tool last><FaRegHandPaper size={14} color="#333" className="-ml-[4px]" /></Tool>
          </div>
        </div>
      </div>
      <div className="flex h-[569px] shrink-0">
        <div className="flex w-[32px] shrink-0 flex-col border-r border-[#3d3d3d] bg-[#595959]">
          <div className="ml-[3px] mt-[338px] flex h-[15px] w-[26px] shrink-0 items-center justify-center rounded-[2px] border border-[#3c3c3c] bg-[#6d6d6d]">
            <svg width="9" height="9" viewBox="0 0 9 9"><path d="M4.500 1v7M1 4.500h7" stroke="#e3e3e3" strokeWidth="1.600" /></svg>
          </div>
          <svg width="31" height="180" viewBox="0 78 31 180" className="mt-[4px] shrink-0">
            <text x="29" y="87.500" textAnchor="end" fontSize="9.500" fontFamily='"DejaVu Sans", sans-serif' fill="#b5b5b5">– dB</text>
            {scale.map(([t, y]) => (
              <g key={t}>
                <text x="22.500" y={y + 4} textAnchor="end" fontSize="9.500" fontFamily='"DejaVu Sans", sans-serif' fill="#b5b5b5">{t}</text>
                <path d={`M25 ${t === '60' ? 228.500 : y + 0.500}h6`} stroke="#a5a5a5" />
              </g>
            ))}
            {[92.500, 120.500, 144.500, 154.500, 168.500, 176.500].map((y) => <path key={y} d={`M28 ${y}h3`} stroke="#a5a5a5" />)}
          </svg>
        </div>
        {strips.map((s, i) => (
          <div key={i} className={`relative w-[62px] shrink-0 bg-[#686868] pl-[3px] pt-[5px] ${s.sel ? '' : 'shadow-[inset_-1px_0_0_#3d3d3d,inset_1px_0_0_#767676]'}`}>
            <Strip s={s} />
            {s.sel && (
              <>
                <div className="absolute inset-0 border-x-2 border-t-2 border-[#46d898]" />
                <div className="absolute bottom-0 left-[2px] h-[4px] w-[58px] bg-[#8fe0f4]" />
              </>
            )}
          </div>
        ))}
        <div className="w-[62px] shrink-0 border-r border-[#444] bg-[#cbcbcb] pl-[3px] pt-[5px]"><Strip s={master} light /></div>
        <div className="flex-1 bg-[#686868]" />
        <div className="w-[15px] border-l border-[#777] bg-gradient-to-r from-[#bdbdbd] to-[#dedede] px-px pb-[7px] pt-[4px]"><div className={`h-full w-full ${vThumb}`} /></div>
      </div>
      <div className="flex h-[15px] shrink-0 border-t border-[#8a8a8a] bg-gradient-to-b from-[#b5b5b5] to-[#d6d6d6]">
        <div className="flex w-[32px] items-center justify-center border-r border-[#888] bg-[#d9d9d9]">
          <svg width="12" height="10" viewBox="0 0 12 10" fill="none" stroke="#777"><rect x="0.500" y="0.500" width="11" height="9" rx="1" /><path d="M6 0.500v9M2 3h2.500M2 5h2.500M2 7h2.500M7.500 3H10M7.500 5H10M7.500 7H10" /></svg>
        </div>
        <div className="flex-1" />
        <div className="flex w-[61px] items-center border-x border-[#888] bg-[#d6d6d6] pl-px">
          <svg width="56" height="12" viewBox="0 0 56 12"><path d="M1 11V4.500L4 1l3 3.500V11z" fill="#d5d5d5" stroke="#333" /><path d="M4 2.500V6" stroke="#333" /><path d="M9 6h3M13.500 6h4M19 6h5M25 6h12M38 6h16" stroke="#a0a0a0" strokeWidth="4" /></svg>
        </div>
        <div className="w-[15px] bg-[#cbcbcb]" />
      </div>
      <div className="flex flex-1 border-t border-[#999]">
        {['Mixer', 'Sample Editor', 'Piano Roll', 'Score', 'Hyper Editor'].map((t, i) => (
          <div key={t} className={`flex items-center justify-center whitespace-nowrap border-r border-[#999] pb-[2px] text-[10px] font-bold leading-none tracking-[-0.15px] ${i === 0 ? 'w-[78px] bg-gradient-to-b from-[#aeb3b7] to-[#bcc0c3] pr-[4px]' : 'w-[80px] pr-[2px]'}`}>{t}</div>
        ))}
      </div>
    </div>
  );
}

/* ---------- transport ---------- */

const glyphs: React.ReactNode[] = [
  <g key="a"><path d="M8 7.500v10" stroke="#3c3c3c" strokeWidth="1.200" /><path d="M17 8v9l-7-4.500z" /></g>,
  <g key="b"><rect x="7.500" y="7.500" width="10.500" height="10.500" fill="none" stroke="#3c3c3c" strokeDasharray="1 1" /><path d="M8.500 8.500v7l6-3.500z" /></g>,
  <path key="c" d="M12.500 8v9l-7-4.500zM19.500 8v9l-7-4.500z" />,
  <path key="d" d="M5.500 8v9l7-4.500zM12.500 8v9l7-4.500z" />,
  <rect key="e" x="8.500" y="8.500" width="8" height="8" />,
  <path key="f" d="M9.500 7.500v10l7.500-5z" />,
  <path key="g" d="M8.500 8h3v9.500h-3zM13.500 8h3v9.500h-3z" />,
  <circle key="h" cx="12.500" cy="12.500" r="4.200" />,
];
const modeGlyphs: React.ReactNode[] = [
  <g key="a"><path d="M6.500 17a7.200 7.200 0 1 1 12 0q-3-2.200-6-2.200T6.500 17z" /><path d="M12 14l4-5.500" stroke="#ddd" strokeWidth="1.300" /><path d="M7.500 11l1 .6M12.500 7.500v1.200M9.500 8.500l.6 1" stroke="#ddd" /></g>,
  <g key="b" fill="#1c6b38"><path d="M11 15.800H9a2.900 2.900 0 0 1 0-5.800h6M14 10h2a2.900 2.900 0 0 1 0 5.800h-6" fill="none" stroke="#1c6b38" strokeWidth="1.800" /><path d="M14.500 7.200v5.600l3.500-2.800zM10.500 13v5.600L7 15.800z" /></g>,
  <g key="c"><path d="M6.500 17.500h12M8.500 19.500h8" stroke="#444" strokeWidth="1.400" /><path d="M9 5.500v4M16 13V9" stroke="#444" strokeWidth="1.600" /><path d="M6.300 9h5.400L9 12.500zM13.300 9.500h5.400L16 6zM7 13.500h4v1.500H7zM14 13.500h4v1.500h-4z" /></g>,
  <g key="d"><path d="M8 6h9v10q-4.500 5-9 0z" /><path d="M9.500 8l6 6.500M15.500 8l-6 6.500" stroke="#ccc" strokeWidth="1.400" /></g>,
  <g key="e"><rect x="8" y="6.500" width="9" height="12" rx="1" /><text x="12.500" y="16" fontSize="9.500" fontWeight="700" fill="#ccc" textAnchor="middle" fontFamily='"Liberation Sans", sans-serif'>S</text></g>,
  <g key="f"><path d="M13.500 5l4.500 10.500H9z" /><path d="M6.500 16.800h12" stroke="#444" strokeWidth="1.400" /><path d="M8 19h2M15 19h2" stroke="#444" strokeWidth="1.200" /><path d="M5.500 7.500l9 8" stroke="#444" strokeWidth="1.300" /><path d="M8.500 8l7 6.500" stroke="#bbb" strokeWidth="0.700" /></g>,
];

function Pill({ items, active, green }: { items: React.ReactNode[]; active: number; green?: boolean }) {
  return (
    <div className="flex h-[32px] items-center gap-[7px] rounded-full bg-gradient-to-b from-[#a4a4a4] to-[#bdbdbd] px-[3px] shadow-[inset_0_1px_2px_#7d7d7d,0_1px_0_#dcdcdc]">
      {items.map((g, i) => (
        <div key={i} className={`flex h-[25px] w-[25px] items-center justify-center rounded-full border ${i === active ? (green ? 'border-[#25a04c] bg-gradient-to-b from-[#7af09b] to-[#52d878] shadow-[0_0_4px_#5df08a]' : 'border-[#5f6874] bg-gradient-to-b from-[#bcc4d0] to-[#a4acb8]') : 'border-[#7c7c7c] bg-gradient-to-b from-[#e4e4e4] to-[#bdbdbd] shadow-[inset_0_1px_0_#fff]'}`}>
          <svg width="25" height="25" viewBox="0 0 25 25" fill="#3f3f3f" className="shrink-0">{g}</svg>
        </div>
      ))}
    </div>
  );
}

function Lcd() {
  const cell = 'flex flex-col justify-center border-r border-[#232121] shadow-[1px_0_0_#585656] shrink-0';
  const row = 'h-[15px] leading-[15px] whitespace-pre';
  return (
    <div className="flex h-[37px] w-[547px] shrink-0 rounded-[5px] border border-[#2b2b2b] bg-[#403e3f] font-['Liberation_Sans',Arial,sans-serif] text-[14px] text-[#e2f1f5] shadow-[0_1px_0_#ddd]">
      <div className={`${cell} w-[126px] pl-[7px]`}>
        <div className={`${row} tracking-[-0.45px]`}>01 : 01 : 47 ; 29.40</div>
        <div className={`${row} flex tracking-[-0.4px]`}>
          <span className="w-[38px] text-right">59</span><span className="w-[22px] text-right">3</span><span className="w-[22px] text-right">2</span><span className="w-[33px] text-right">184.</span>
        </div>
      </div>
      <div className={`${cell} w-[120px]`}>
        {[['5', '1', '1', '1'], ['56', '3', '1', '1']].map((r, i) => (
          <div key={i} className={`${row} flex tracking-[-0.3px]`}>
            <span className="w-[41px] text-right">{r[0]}</span><span className="w-[22px] text-right">{r[1]}</span><span className="w-[21px] text-right">{r[2]}</span><span className="w-[29px] text-right">{r[3]}</span>
          </div>
        ))}
      </div>
      <div className={`${cell} w-[71px]`}>
        <div className={`${row} pr-[10px] text-right tracking-[-0.5px]`}>98.0000</div>
        <div className={`${row} pr-[7px] text-right tracking-[-0.5px]`}>666</div>
      </div>
      <div className={`${cell} w-[50px]`}>
        <div className={`${row} pl-[13px]`}>3/4</div>
        <div className={`${row} pr-[9px] text-right tracking-[-0.4px]`}>/16</div>
      </div>
      <div className={`${cell} w-[109px] pl-[14px]`}>
        <div className={`${row} tracking-[-0.3px]`}>No In</div>
        <div className={`${row} tracking-[-0.3px]`}>No Out</div>
      </div>
      <div className="flex flex-col justify-center gap-[4px] pl-[6px] font-bold leading-none">
        {['CPU', 'HD'].map((t, i) => (
          <div key={t} className="flex items-center">
            <span className="w-[16px] pr-[3px] text-right text-[7px] tracking-[-0.1px]">{t}</span>
            <div className="h-[10px] w-[40px] bg-[repeating-linear-gradient(90deg,#56534a_0px,#56534a_2px,#2d2b28_2px,#2d2b28_3px)]">
              {i === 0 && <div className="h-full w-[6px] bg-[repeating-linear-gradient(90deg,#cfe3e6_0px,#cfe3e6_2px,#667_2px,#667_3px)]" />}
            </div>
          </div>
        ))}
      </div>
    </div>
  );
}

function Transport() {
  return (
    <div className="ml-[7px] mt-[6px] flex h-[48px] w-[1907px] items-center rounded-[5px] border border-[#7d7d7d] bg-gradient-to-b from-[#d6d6d6] to-[#a6a6a6] shadow-[inset_0_1px_0_#f4f4f4]">
      <div className="ml-[401px]"><Pill items={glyphs} active={4} /></div>
      <div className="ml-[22px]"><Lcd /></div>
      <div className="ml-[21px]"><Pill items={modeGlyphs} active={1} green /></div>
      <div className="ml-auto flex items-center pr-[20px]">
        <svg width="10" height="10" viewBox="0 0 10 10"><path d="M0 3h2.500L6 0v10L2.500 7H0z" fill="#2e2e2e" /><path d="M7.500 3.500q1.500 1.500 0 3" stroke="#2e2e2e" fill="none" strokeWidth="1.200" /></svg>
        <div className="ml-[6px] flex h-[5px] w-[80px] items-center rounded-full border border-[#777] bg-[#dcdcdc]">
          <div className="ml-[48px] h-[11px] w-[11px] rounded-full border border-[#5d6470] bg-gradient-to-b from-white to-[#9da9bd]" />
        </div>
        <svg width="14" height="12" viewBox="0 0 14 12" className="ml-[5px]"><path d="M0 4h2.500L6 1v10L2.500 8H0z" fill="#2e2e2e" /><path d="M7.500 4q1.500 2 0 4M9.300 2.500q2.400 3.500 0 7M11.200 1q3 5 0 10" stroke="#2e2e2e" fill="none" strokeWidth="1.100" /></svg>
      </div>
    </div>
  );
}

export default function App() {
  return (
    <div className="flex h-[986px] w-[1920px] flex-col overflow-hidden bg-[#b9b9b9] bg-gradient-to-b from-[#bababa] to-[#bfbfbf] font-['Open_Sans','Noto_Sans',sans-serif] text-black">
      <div className="flex h-[926px] shrink-0">
        <div className="pl-[7px] pt-[7px]"><Inspector /></div>
        <div className="flex flex-col pl-[2px] pt-[2px]">
          <Arrange />
          <Mixer />
        </div>
      </div>
      <Transport />
    </div>
  );
}
